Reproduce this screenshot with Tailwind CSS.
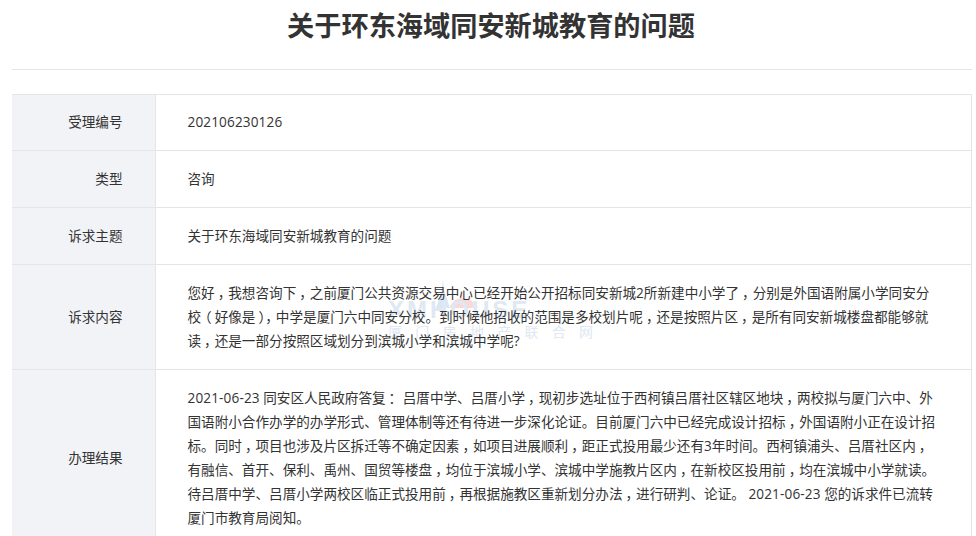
<!DOCTYPE html>
<html lang="zh-CN">
<head>
  <meta charset="UTF-8" />
  <title>关于环东海域同安新城教育的问题</title>
  <script src="https://cdn.jsdelivr.net/npm/@tailwindcss/browser@4"></script>
</head>
<body class="bg-white h-[536px] overflow-hidden font-['Open_Sans','Noto_Sans_CJK_SC',sans-serif] text-[13.6px] leading-6 text-[#333] [&_i]:not-italic [&_i]:relative [&_i]:left-[3px] [&_u]:no-underline [&_u]:tracking-[0.13px]">
  <div class="mx-3 w-[960px]">
    <h1 class="h-[70px] border-b border-[#e5e5e5] pt-[6px] pr-[2px] text-center text-[27.2px] leading-10 font-bold">关于环东海域同安新城教育的问题</h1>

    <div class="relative mt-6 border-t border-r border-[#e5e5e5]">
      <!-- 水印 -->
      <div class="absolute left-[376px] top-[183px] w-[220px] select-none">
        <svg class="absolute left-[40px] top-0" width="80" height="30" viewBox="0 0 80 30">
          <path d="M15 0L16 12L22 30H8L14 12Z" fill="#dbe6f3" />
          <path d="M21 34A14 14 0 0 1 49 34Z" fill="#f9d9d8" />
        </svg>
        <div class="absolute left-0 top-[18px] text-[24px] leading-7 font-['Liberation_Sans'] font-bold tracking-[3px] text-[#dfe8f3]">XMHOUSE</div>
        <div class="absolute left-0 top-[44px] text-[14px] leading-5 tracking-[13.3px] whitespace-nowrap text-[#e0e8f2]">厦门房地产联合网</div>
      </div>

      <div class="relative flex h-14 border-b border-[#e5e5e5]">
        <div class="flex w-[144px] shrink-0 items-center justify-end border-r border-[#e5e5e5] bg-[#f2f3f7] pr-[32.5px] pb-[1px]">受理编号</div>
        <div class="flex items-center pl-[31.5px] pb-[1px]"><u>202106230126</u></div>
      </div>
      <div class="relative flex h-[57px] border-b border-[#e5e5e5]">
        <div class="flex w-[144px] shrink-0 items-center justify-end border-r border-[#e5e5e5] bg-[#f2f3f7] pr-[32.5px] pb-[1px]">类型</div>
        <div class="flex items-center pl-[31.5px] pb-[1px]">咨询</div>
      </div>
      <div class="relative flex h-[57px] border-b border-[#e5e5e5]">
        <div class="flex w-[144px] shrink-0 items-center justify-end border-r border-[#e5e5e5] bg-[#f2f3f7] pr-[32.5px] pb-[1px]">诉求主题</div>
        <div class="flex items-center pl-[31.5px] pb-[1px]">关于环东海域同安新城教育的问题</div>
      </div>
      <div class="relative flex h-[105px] border-b border-[#e5e5e5]">
        <div class="flex w-[144px] shrink-0 items-center justify-end border-r border-[#e5e5e5] bg-[#f2f3f7] pr-[32.5px] pb-[1px]">诉求内容</div>
        <div class="flex items-center pl-[31.5px] whitespace-nowrap"><p>您好<i>，</i>我想咨询下<i>，</i>之前厦门公共资源交易中心已经开始公开招标同安新城2所新建中小学了<i>，</i>分别是外国语附属小学同安分<br>校<span class="relative -left-[3px]">（</span>好像是<i>）</i><i>，</i>中学是厦门六中同安分校。到时候他招收的范围是多校划片呢<i>，</i>还是按照片区<i>，</i>是所有同安新城楼盘都能够就<br>读<i>，</i>还是一部分按照区域划分到滨城小学和滨城中学呢?</p></div>
      </div>
      <div class="relative flex h-[177px] border-b border-[#e5e5e5]">
        <div class="flex w-[144px] shrink-0 items-center justify-end border-r border-[#e5e5e5] bg-[#f2f3f7] pr-[32.5px] pb-[1px]">办理结果</div>
        <div class="flex items-center pl-[31.5px] whitespace-nowrap"><p><u>2021-06-23</u> 同安区人民政府答复<i>：</i> 吕厝中学、吕厝小学<i>，</i>现初步选址位于西柯镇吕厝社区辖区地块<i>，</i>两校拟与厦门六中、外<br>国语附小合作办学的办学形式、管理体制等还有待进一步深化论证。目前厦门六中已经完成设计招标<i>，</i>外国语附小正在设计招<br>标。同时<i>，</i>项目也涉及片区拆迁等不确定因素<i>，</i>如项目进展顺利<i>，</i>距正式投用最少还有3年时间。西柯镇浦头、吕厝社区内<i>，</i><br>有融信、首开、保利、禹州、国贸等楼盘<i>，</i>均位于滨城小学、滨城中学施教片区内<i>，</i>在新校区投用前<i>，</i>均在滨城中小学就读。<br>待吕厝中学、吕厝小学两校区临正式投用前<i>，</i>再根据施教区重新划分办法<i>，</i>进行研判、论证。 <u>2021-06-23</u> 您的诉求件已流转<br>厦门市教育局阅知。</p></div>
      </div>
    </div>
  </div>
</body>
</html>
